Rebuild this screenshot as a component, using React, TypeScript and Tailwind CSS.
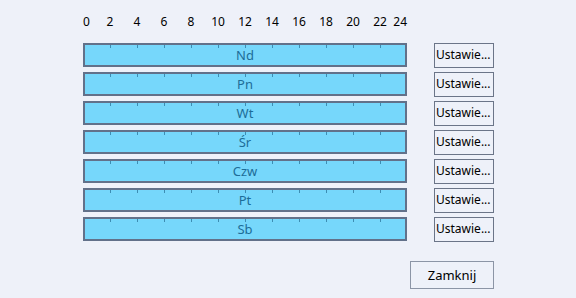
const days = ["Nd", "Pn", "Wt", "Śr", "Czw", "Pt", "Sb"];
const hours = [0, 2, 4, 6, 8, 10, 12, 14, 16, 18, 20, 22, 24];

function DayBar({ label }: { label: string }) {
  return (
    <div className="relative flex h-[24px] w-[324px] items-center justify-center border-2 border-[#62718a] bg-[#76d7fb]">
      {hours.slice(1, 12).map((h) => (
        <span
          key={h}
          className="absolute top-0 h-[3px] w-px bg-[#3d8db3]"
          style={{ left: (h / 2) * 27 - 2 }}
        />
      ))}
      <span className="text-[13px] leading-none text-[#1d6d98]">{label}</span>
    </div>
  );
}

export default function App() {
  return (
    <div
      className="h-[298px] w-[576px] overflow-hidden bg-[#eef1f9] text-black"
      style={{ fontFamily: '"Noto Sans", "Open Sans", sans-serif' }}
    >
      {/* hour scale */}
      <div className="relative ml-[83px] pt-[14px] h-[30px] w-[324px] text-[12px] leading-[16px]">
        {hours.map((h, i) => {
          const x = i * 27;
          const pos =
            i === 0 ? { left: 0 } : i === 12 ? { right: 0 } : { left: x, transform: "translateX(-50%)" };
          return (
            <span key={h} className="absolute top-[14px]" style={pos}>
              {h}
            </span>
          );
        })}
      </div>

      {/* day rows */}
      <div className="mt-[13px] flex flex-col gap-[5px] pl-[83px]">
        {days.map((d) => (
          <div key={d} className="flex h-[24px] items-center">
            <DayBar label={d} />
            <button className="ml-[27px] h-[25px] w-[60px] shrink-0 overflow-hidden whitespace-nowrap border border-[#6b7588] bg-[#eef1f9] pl-px text-left text-[12px] leading-none">
              Ustawie...
            </button>
          </div>
        ))}
      </div>

      {/* footer */}
      <div className="mt-[20px] flex justify-end pr-[82px]">
        <button className="h-[28px] w-[84px] border border-[#8c95a6] bg-[#eef1f9] text-[13px] leading-none">
          Zamknij
        </button>
      </div>
    </div>
  );
}
